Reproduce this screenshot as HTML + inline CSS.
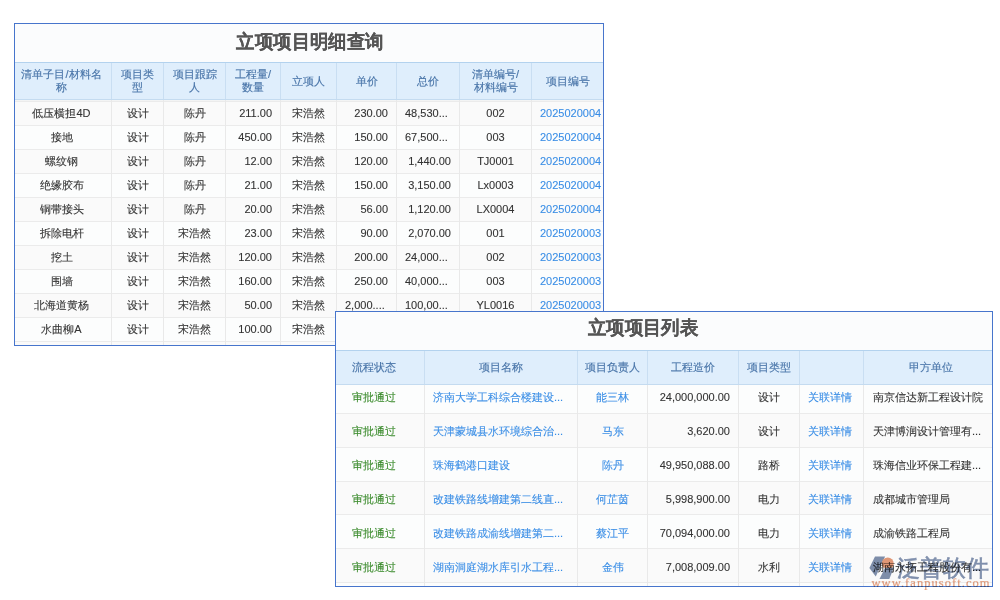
<!DOCTYPE html>
<html><head><meta charset="utf-8">
<style>
*{margin:0;padding:0;box-sizing:border-box}
html,body{width:1000px;height:600px;background:#fff;overflow:hidden;font-family:"Liberation Sans",sans-serif;color:#333}
.t{position:absolute;border:1px solid #4775cc;background:#fbfcfd;overflow:hidden}
.ttl{position:absolute;width:400px;text-align:center;font-weight:bold;color:#555;font-size:19px;line-height:22px;white-space:nowrap;transform:scaleX(0.97);-webkit-text-stroke:0.1px #555}
.rb{position:absolute;left:0;right:0;border-top:1px solid #ebebeb;background:#fcfdfd}
.rb.od{background:#fafafa}
.hd{position:absolute;left:0;right:0;background:#dfeefc;border-top:1px solid #b3d2ee;border-bottom:1px solid #c4dbf0}
.vl{position:absolute;width:1px;background:#e9e9e9}
.vh{position:absolute;width:1px;background:#c9def2}
.ht{position:absolute;display:flex;align-items:center;justify-content:center;text-align:center;color:#4874a8;font-size:11px;-webkit-text-stroke:0.15px #4874a8}
.dt{position:absolute;font-size:11px;white-space:nowrap;overflow:hidden;-webkit-text-stroke:0.1px}
.dt.c{text-align:center}
.dt.r{text-align:right;padding-right:8px}
.dt.l{text-align:left;padding-left:8px}
.dt.le{text-align:left;padding-left:8px}
.lk{color:#3a8ee6}
.gr{color:#3c8c2e}
.wm{position:absolute;left:0;top:0;mix-blend-mode:multiply}
.wmt{position:absolute;font-size:23px;line-height:30px;color:#8292b0;white-space:nowrap;-webkit-text-stroke:0.6px #8292b0}
.wmu{position:absolute;font-family:"Liberation Serif",serif;font-size:12.5px;line-height:14px;letter-spacing:1.05px;color:#e6a080;white-space:nowrap;-webkit-text-stroke:0.2px #e6a080}

</style></head><body>
<div class="t" style="left:14px;top:23px;width:590px;height:323px">
<div class="ttl" style="left:94.60000000000002px;top:6.5px">立项项目明细查询</div>
<div class="rb od" style="top:77px;height:24px"></div>
<div class="rb" style="top:101px;height:24px"></div>
<div class="rb od" style="top:125px;height:24px"></div>
<div class="rb" style="top:149px;height:24px"></div>
<div class="rb od" style="top:173px;height:24px"></div>
<div class="rb" style="top:197px;height:24px"></div>
<div class="rb od" style="top:221px;height:24px"></div>
<div class="rb" style="top:245px;height:24px"></div>
<div class="rb od" style="top:269px;height:24px"></div>
<div class="rb" style="top:293px;height:24px"></div>
<div class="rb od" style="top:317px;height:4px"></div>
<div style="position:absolute;left:0;right:0;top:76px;height:1px;background:#f3f4f4"></div>
<div class="hd" style="top:38px;height:38px"></div>
<div class="vl" style="left:96px;top:76px;height:246px"></div>
<div class="vh" style="left:96px;top:39px;height:36px"></div>
<div class="vl" style="left:148px;top:76px;height:246px"></div>
<div class="vh" style="left:148px;top:39px;height:36px"></div>
<div class="vl" style="left:210px;top:76px;height:246px"></div>
<div class="vh" style="left:210px;top:39px;height:36px"></div>
<div class="vl" style="left:265px;top:76px;height:246px"></div>
<div class="vh" style="left:265px;top:39px;height:36px"></div>
<div class="vl" style="left:321px;top:76px;height:246px"></div>
<div class="vh" style="left:321px;top:39px;height:36px"></div>
<div class="vl" style="left:381px;top:76px;height:246px"></div>
<div class="vh" style="left:381px;top:39px;height:36px"></div>
<div class="vl" style="left:444px;top:76px;height:246px"></div>
<div class="vh" style="left:444px;top:39px;height:36px"></div>
<div class="vl" style="left:516px;top:76px;height:246px"></div>
<div class="vh" style="left:516px;top:39px;height:36px"></div>
<div class="ht" style="left:-1px;width:95px;top:39px;height:36px;line-height:13px"><span>清单子目/材料名<br>称</span></div>
<div class="ht" style="left:97px;width:51px;top:39px;height:36px;line-height:13px"><span>项目类<br>型</span></div>
<div class="ht" style="left:149px;width:61px;top:39px;height:36px;line-height:13px"><span>项目跟踪<br>人</span></div>
<div class="ht" style="left:211px;width:54px;top:39px;height:36px;line-height:13px"><span>工程量/<br>数量</span></div>
<div class="ht" style="left:266px;width:55px;top:39px;height:36px;line-height:13px"><span>立项人</span></div>
<div class="ht" style="left:322px;width:59px;top:39px;height:36px;line-height:13px"><span>单价</span></div>
<div class="ht" style="left:382px;width:62px;top:39px;height:36px;line-height:13px"><span>总价</span></div>
<div class="ht" style="left:445px;width:71px;top:39px;height:36px;line-height:13px"><span>清单编号/<br>材料编号</span></div>
<div class="ht" style="left:517px;width:71px;top:39px;height:36px;line-height:13px"><span>项目编号</span></div>
<div class="dt c" style="left:-1px;width:95px;top:77px;height:24px;line-height:24px">低压横担4D</div>
<div class="dt c" style="left:97px;width:51px;top:77px;height:24px;line-height:24px">设计</div>
<div class="dt c" style="left:149px;width:61px;top:77px;height:24px;line-height:24px">陈丹</div>
<div class="dt r" style="left:211px;width:54px;top:77px;height:24px;line-height:24px">211.00</div>
<div class="dt c" style="left:266px;width:55px;top:77px;height:24px;line-height:24px">宋浩然</div>
<div class="dt r" style="left:322px;width:59px;top:77px;height:24px;line-height:24px">230.00</div>
<div class="dt le" style="left:382px;width:62px;top:77px;height:24px;line-height:24px">48,530...</div>
<div class="dt c" style="left:445px;width:71px;top:77px;height:24px;line-height:24px">002</div>
<div class="dt l lk" style="left:517px;width:71px;top:77px;height:24px;line-height:24px">2025020004</div>
<div class="dt c" style="left:-1px;width:95px;top:101px;height:24px;line-height:24px">接地</div>
<div class="dt c" style="left:97px;width:51px;top:101px;height:24px;line-height:24px">设计</div>
<div class="dt c" style="left:149px;width:61px;top:101px;height:24px;line-height:24px">陈丹</div>
<div class="dt r" style="left:211px;width:54px;top:101px;height:24px;line-height:24px">450.00</div>
<div class="dt c" style="left:266px;width:55px;top:101px;height:24px;line-height:24px">宋浩然</div>
<div class="dt r" style="left:322px;width:59px;top:101px;height:24px;line-height:24px">150.00</div>
<div class="dt le" style="left:382px;width:62px;top:101px;height:24px;line-height:24px">67,500...</div>
<div class="dt c" style="left:445px;width:71px;top:101px;height:24px;line-height:24px">003</div>
<div class="dt l lk" style="left:517px;width:71px;top:101px;height:24px;line-height:24px">2025020004</div>
<div class="dt c" style="left:-1px;width:95px;top:125px;height:24px;line-height:24px">螺纹钢</div>
<div class="dt c" style="left:97px;width:51px;top:125px;height:24px;line-height:24px">设计</div>
<div class="dt c" style="left:149px;width:61px;top:125px;height:24px;line-height:24px">陈丹</div>
<div class="dt r" style="left:211px;width:54px;top:125px;height:24px;line-height:24px">12.00</div>
<div class="dt c" style="left:266px;width:55px;top:125px;height:24px;line-height:24px">宋浩然</div>
<div class="dt r" style="left:322px;width:59px;top:125px;height:24px;line-height:24px">120.00</div>
<div class="dt r" style="left:382px;width:62px;top:125px;height:24px;line-height:24px">1,440.00</div>
<div class="dt c" style="left:445px;width:71px;top:125px;height:24px;line-height:24px">TJ0001</div>
<div class="dt l lk" style="left:517px;width:71px;top:125px;height:24px;line-height:24px">2025020004</div>
<div class="dt c" style="left:-1px;width:95px;top:149px;height:24px;line-height:24px">绝缘胶布</div>
<div class="dt c" style="left:97px;width:51px;top:149px;height:24px;line-height:24px">设计</div>
<div class="dt c" style="left:149px;width:61px;top:149px;height:24px;line-height:24px">陈丹</div>
<div class="dt r" style="left:211px;width:54px;top:149px;height:24px;line-height:24px">21.00</div>
<div class="dt c" style="left:266px;width:55px;top:149px;height:24px;line-height:24px">宋浩然</div>
<div class="dt r" style="left:322px;width:59px;top:149px;height:24px;line-height:24px">150.00</div>
<div class="dt r" style="left:382px;width:62px;top:149px;height:24px;line-height:24px">3,150.00</div>
<div class="dt c" style="left:445px;width:71px;top:149px;height:24px;line-height:24px">Lx0003</div>
<div class="dt l lk" style="left:517px;width:71px;top:149px;height:24px;line-height:24px">2025020004</div>
<div class="dt c" style="left:-1px;width:95px;top:173px;height:24px;line-height:24px">铜带接头</div>
<div class="dt c" style="left:97px;width:51px;top:173px;height:24px;line-height:24px">设计</div>
<div class="dt c" style="left:149px;width:61px;top:173px;height:24px;line-height:24px">陈丹</div>
<div class="dt r" style="left:211px;width:54px;top:173px;height:24px;line-height:24px">20.00</div>
<div class="dt c" style="left:266px;width:55px;top:173px;height:24px;line-height:24px">宋浩然</div>
<div class="dt r" style="left:322px;width:59px;top:173px;height:24px;line-height:24px">56.00</div>
<div class="dt r" style="left:382px;width:62px;top:173px;height:24px;line-height:24px">1,120.00</div>
<div class="dt c" style="left:445px;width:71px;top:173px;height:24px;line-height:24px">LX0004</div>
<div class="dt l lk" style="left:517px;width:71px;top:173px;height:24px;line-height:24px">2025020004</div>
<div class="dt c" style="left:-1px;width:95px;top:197px;height:24px;line-height:24px">拆除电杆</div>
<div class="dt c" style="left:97px;width:51px;top:197px;height:24px;line-height:24px">设计</div>
<div class="dt c" style="left:149px;width:61px;top:197px;height:24px;line-height:24px">宋浩然</div>
<div class="dt r" style="left:211px;width:54px;top:197px;height:24px;line-height:24px">23.00</div>
<div class="dt c" style="left:266px;width:55px;top:197px;height:24px;line-height:24px">宋浩然</div>
<div class="dt r" style="left:322px;width:59px;top:197px;height:24px;line-height:24px">90.00</div>
<div class="dt r" style="left:382px;width:62px;top:197px;height:24px;line-height:24px">2,070.00</div>
<div class="dt c" style="left:445px;width:71px;top:197px;height:24px;line-height:24px">001</div>
<div class="dt l lk" style="left:517px;width:71px;top:197px;height:24px;line-height:24px">2025020003</div>
<div class="dt c" style="left:-1px;width:95px;top:221px;height:24px;line-height:24px">挖土</div>
<div class="dt c" style="left:97px;width:51px;top:221px;height:24px;line-height:24px">设计</div>
<div class="dt c" style="left:149px;width:61px;top:221px;height:24px;line-height:24px">宋浩然</div>
<div class="dt r" style="left:211px;width:54px;top:221px;height:24px;line-height:24px">120.00</div>
<div class="dt c" style="left:266px;width:55px;top:221px;height:24px;line-height:24px">宋浩然</div>
<div class="dt r" style="left:322px;width:59px;top:221px;height:24px;line-height:24px">200.00</div>
<div class="dt le" style="left:382px;width:62px;top:221px;height:24px;line-height:24px">24,000...</div>
<div class="dt c" style="left:445px;width:71px;top:221px;height:24px;line-height:24px">002</div>
<div class="dt l lk" style="left:517px;width:71px;top:221px;height:24px;line-height:24px">2025020003</div>
<div class="dt c" style="left:-1px;width:95px;top:245px;height:24px;line-height:24px">围墙</div>
<div class="dt c" style="left:97px;width:51px;top:245px;height:24px;line-height:24px">设计</div>
<div class="dt c" style="left:149px;width:61px;top:245px;height:24px;line-height:24px">宋浩然</div>
<div class="dt r" style="left:211px;width:54px;top:245px;height:24px;line-height:24px">160.00</div>
<div class="dt c" style="left:266px;width:55px;top:245px;height:24px;line-height:24px">宋浩然</div>
<div class="dt r" style="left:322px;width:59px;top:245px;height:24px;line-height:24px">250.00</div>
<div class="dt le" style="left:382px;width:62px;top:245px;height:24px;line-height:24px">40,000...</div>
<div class="dt c" style="left:445px;width:71px;top:245px;height:24px;line-height:24px">003</div>
<div class="dt l lk" style="left:517px;width:71px;top:245px;height:24px;line-height:24px">2025020003</div>
<div class="dt c" style="left:-1px;width:95px;top:269px;height:24px;line-height:24px">北海道黄杨</div>
<div class="dt c" style="left:97px;width:51px;top:269px;height:24px;line-height:24px">设计</div>
<div class="dt c" style="left:149px;width:61px;top:269px;height:24px;line-height:24px">宋浩然</div>
<div class="dt r" style="left:211px;width:54px;top:269px;height:24px;line-height:24px">50.00</div>
<div class="dt c" style="left:266px;width:55px;top:269px;height:24px;line-height:24px">宋浩然</div>
<div class="dt le" style="left:322px;width:59px;top:269px;height:24px;line-height:24px">2,000....</div>
<div class="dt le" style="left:382px;width:62px;top:269px;height:24px;line-height:24px">100,00...</div>
<div class="dt c" style="left:445px;width:71px;top:269px;height:24px;line-height:24px">YL0016</div>
<div class="dt l lk" style="left:517px;width:71px;top:269px;height:24px;line-height:24px">2025020003</div>
<div class="dt c" style="left:-1px;width:95px;top:293px;height:24px;line-height:24px">水曲柳A</div>
<div class="dt c" style="left:97px;width:51px;top:293px;height:24px;line-height:24px">设计</div>
<div class="dt c" style="left:149px;width:61px;top:293px;height:24px;line-height:24px">宋浩然</div>
<div class="dt r" style="left:211px;width:54px;top:293px;height:24px;line-height:24px">100.00</div>
<div class="dt c" style="left:266px;width:55px;top:293px;height:24px;line-height:24px">宋浩然</div>
</div>
<div class="t" style="left:335px;top:311px;width:658px;height:276px">
<div class="ttl" style="left:107px;top:5px">立项项目列表</div>
<div class="rb" style="top:67px;height:34px"></div>
<div class="rb od" style="top:101px;height:34px"></div>
<div class="rb" style="top:135px;height:34px"></div>
<div class="rb od" style="top:169px;height:33px"></div>
<div class="rb" style="top:202px;height:34px"></div>
<div class="rb od" style="top:236px;height:34px"></div>
<div class="rb" style="top:270px;height:4px"></div>
<div class="hd" style="top:38px;height:35px"></div>
<div class="vl" style="left:88px;top:73px;height:202px"></div>
<div class="vh" style="left:88px;top:39px;height:33px"></div>
<div class="vl" style="left:241px;top:73px;height:202px"></div>
<div class="vh" style="left:241px;top:39px;height:33px"></div>
<div class="vl" style="left:311px;top:73px;height:202px"></div>
<div class="vh" style="left:311px;top:39px;height:33px"></div>
<div class="vl" style="left:402px;top:73px;height:202px"></div>
<div class="vh" style="left:402px;top:39px;height:33px"></div>
<div class="vl" style="left:463px;top:73px;height:202px"></div>
<div class="vh" style="left:463px;top:39px;height:33px"></div>
<div class="vl" style="left:527px;top:73px;height:202px"></div>
<div class="vh" style="left:527px;top:39px;height:33px"></div>
<div class="ht" style="left:-5.5px;width:87px;top:39px;height:33px;line-height:13px"><span>流程状态</span></div>
<div class="ht" style="left:89px;width:152px;top:39px;height:33px;line-height:13px"><span>项目名称</span></div>
<div class="ht" style="left:242px;width:69px;top:39px;height:33px;line-height:13px"><span>项目负责人</span></div>
<div class="ht" style="left:312px;width:90px;top:39px;height:33px;line-height:13px"><span>工程造价</span></div>
<div class="ht" style="left:403px;width:60px;top:39px;height:33px;line-height:13px"><span>项目类型</span></div>
<div class="ht" style="left:464px;width:63px;top:39px;height:33px;line-height:13px"><span></span></div>
<div class="ht" style="left:530.5px;width:128px;top:39px;height:33px;line-height:13px"><span>甲方单位</span></div>
<div class="dt c gr" style="left:-5.5px;width:87px;top:68px;height:34px;line-height:34px">审批通过</div>
<div class="dt l lk" style="left:89px;width:152px;top:68px;height:34px;line-height:34px">济南大学工科综合楼建设...</div>
<div class="dt c lk" style="left:242px;width:69px;top:68px;height:34px;line-height:34px">能三林</div>
<div class="dt r" style="left:312px;width:90px;top:68px;height:34px;line-height:34px">24,000,000.00</div>
<div class="dt c" style="left:403px;width:60px;top:68px;height:34px;line-height:34px">设计</div>
<div class="dt c lk" style="left:462px;width:63px;top:68px;height:34px;line-height:34px">关联详情</div>
<div class="dt l" style="left:529px;width:128px;top:68px;height:34px;line-height:34px">南京信达新工程设计院</div>
<div class="dt c gr" style="left:-5.5px;width:87px;top:102px;height:34px;line-height:34px">审批通过</div>
<div class="dt l lk" style="left:89px;width:152px;top:102px;height:34px;line-height:34px">天津蒙城县水环境综合治...</div>
<div class="dt c lk" style="left:242px;width:69px;top:102px;height:34px;line-height:34px">马东</div>
<div class="dt r" style="left:312px;width:90px;top:102px;height:34px;line-height:34px">3,620.00</div>
<div class="dt c" style="left:403px;width:60px;top:102px;height:34px;line-height:34px">设计</div>
<div class="dt c lk" style="left:462px;width:63px;top:102px;height:34px;line-height:34px">关联详情</div>
<div class="dt l" style="left:529px;width:128px;top:102px;height:34px;line-height:34px">天津博润设计管理有...</div>
<div class="dt c gr" style="left:-5.5px;width:87px;top:136px;height:34px;line-height:34px">审批通过</div>
<div class="dt l lk" style="left:89px;width:152px;top:136px;height:34px;line-height:34px">珠海鹤港口建设</div>
<div class="dt c lk" style="left:242px;width:69px;top:136px;height:34px;line-height:34px">陈丹</div>
<div class="dt r" style="left:312px;width:90px;top:136px;height:34px;line-height:34px">49,950,088.00</div>
<div class="dt c" style="left:403px;width:60px;top:136px;height:34px;line-height:34px">路桥</div>
<div class="dt c lk" style="left:462px;width:63px;top:136px;height:34px;line-height:34px">关联详情</div>
<div class="dt l" style="left:529px;width:128px;top:136px;height:34px;line-height:34px">珠海信业环保工程建...</div>
<div class="dt c gr" style="left:-5.5px;width:87px;top:170px;height:34px;line-height:34px">审批通过</div>
<div class="dt l lk" style="left:89px;width:152px;top:170px;height:34px;line-height:34px">改建铁路线增建第二线直...</div>
<div class="dt c lk" style="left:242px;width:69px;top:170px;height:34px;line-height:34px">何芷茵</div>
<div class="dt r" style="left:312px;width:90px;top:170px;height:34px;line-height:34px">5,998,900.00</div>
<div class="dt c" style="left:403px;width:60px;top:170px;height:34px;line-height:34px">电力</div>
<div class="dt c lk" style="left:462px;width:63px;top:170px;height:34px;line-height:34px">关联详情</div>
<div class="dt l" style="left:529px;width:128px;top:170px;height:34px;line-height:34px">成都城市管理局</div>
<div class="dt c gr" style="left:-5.5px;width:87px;top:204px;height:34px;line-height:34px">审批通过</div>
<div class="dt l lk" style="left:89px;width:152px;top:204px;height:34px;line-height:34px">改建铁路成渝线增建第二...</div>
<div class="dt c lk" style="left:242px;width:69px;top:204px;height:34px;line-height:34px">蔡江平</div>
<div class="dt r" style="left:312px;width:90px;top:204px;height:34px;line-height:34px">70,094,000.00</div>
<div class="dt c" style="left:403px;width:60px;top:204px;height:34px;line-height:34px">电力</div>
<div class="dt c lk" style="left:462px;width:63px;top:204px;height:34px;line-height:34px">关联详情</div>
<div class="dt l" style="left:529px;width:128px;top:204px;height:34px;line-height:34px">成渝铁路工程局</div>
<div class="dt c gr" style="left:-5.5px;width:87px;top:238px;height:34px;line-height:34px">审批通过</div>
<div class="dt l lk" style="left:89px;width:152px;top:238px;height:34px;line-height:34px">湖南洞庭湖水库引水工程...</div>
<div class="dt c lk" style="left:242px;width:69px;top:238px;height:34px;line-height:34px">金伟</div>
<div class="dt r" style="left:312px;width:90px;top:238px;height:34px;line-height:34px">7,008,009.00</div>
<div class="dt c" style="left:403px;width:60px;top:238px;height:34px;line-height:34px">水利</div>
<div class="dt c lk" style="left:462px;width:63px;top:238px;height:34px;line-height:34px">关联详情</div>
<div class="dt l" style="left:529px;width:128px;top:238px;height:34px;line-height:34px">湖南永拓工程股份有...</div>
</div>
<div class="wm">
<svg style="position:absolute;left:868px;top:555px" width="30" height="26" viewBox="0 0 30 26">
<defs><clipPath id="cp"><rect x="0" y="0" width="30" height="12.75"/></clipPath></defs>
<polygon points="1.4,13.1 7,1.5 17.1,1.5 7.75,21.4" fill="#8090ad"/>
<polygon points="11.5,24 21.3,24 25.8,12.75 17.1,12.75" fill="#8090ad"/>
<circle cx="19.75" cy="8.6" r="6" fill="#e59a78" clip-path="url(#cp)"/>
</svg>
<div class="wmt" style="left:896.5px;top:552.5px">泛普软件</div>
<div class="wmu" style="left:871.5px;top:576px">www.fanpusoft.com</div>
</div>

</body></html>
